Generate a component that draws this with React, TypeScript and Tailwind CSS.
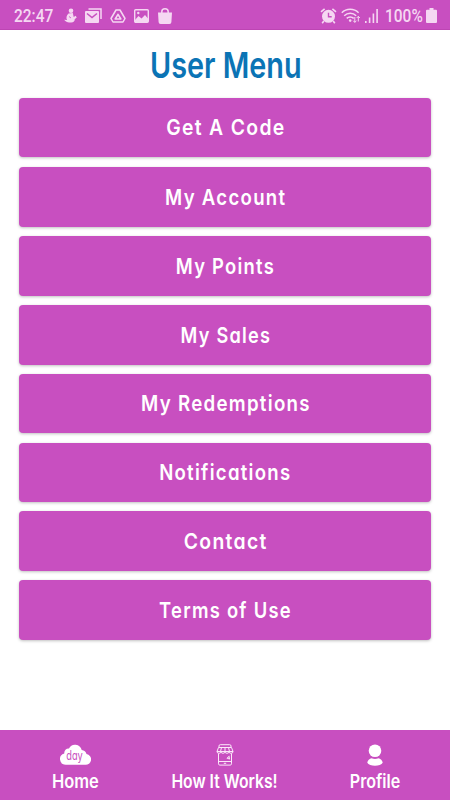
import React from 'react';

interface MenuItem {
    label: string;
    textClass: string;
}

const menuItems: MenuItem[] = [
    { label: 'Get A Code', textClass: 'scale-x-[0.88]' },
    { label: 'My Account', textClass: 'scale-x-[0.845]' },
    { label: 'My Points', textClass: 'scale-x-[0.835]' },
    { label: 'My Sales', textClass: 'scale-x-[0.825]' },
    { label: 'My Redemptions', textClass: 'scale-x-[0.85]' },
    { label: 'Notifications', textClass: 'scale-x-[0.845]' },
    { label: 'Contact', textClass: 'scale-x-[0.88]' },
    { label: 'Terms of Use', textClass: 'scale-x-[0.835]' },
];

function StatusBar() {
    return (
        <header className="flex h-[30px] shrink-0 items-center justify-between border-b border-[#bd45b3] bg-[#c84fc0] pl-[14px] pr-[13px] pt-[2px] font-[Roboto,sans-serif] text-[#f5d7f2]">
            <div className="flex items-center">
                <span className="w-[49.500px] origin-left scale-x-[0.86] whitespace-nowrap text-[18px] font-medium leading-none">22:47</span>
                {/* Figure */}
                <svg className="h-[15px] w-[13px]" viewBox="0 0 13 15" fill="currentColor">
                    <circle cx="7" cy="2.8" r="2.3" />
                    <path d="M4.500 5.500 8.800 5l.9 4 2-1.200 1 1.800-2 1.600c.3 1.800-1.200 3.300-3.500 3.300-3.200 0-5.800-.8-7.100-2.800l3 .2C1.800 10 2.500 7.500 4.500 5.500z" />
                    <path d="M5 8.500l2 1.500" stroke="#c84fc0" strokeWidth="0.800" />
                </svg>
                {/* Mail */}
                <svg className="ml-[8px] h-[15px] w-[17px]" viewBox="0 0 17 15" fill="none">
                    <path d="M3.500 1H16v10" stroke="currentColor" strokeWidth="1.500" />
                    <rect x="0" y="3" width="14" height="12" rx="1" fill="currentColor" />
                    <path d="M2 5.500l5 4 5-4" stroke="#c84fc0" strokeWidth="1.600" />
                </svg>
                {/* Drive triangle */}
                <svg className="ml-[8px] h-[14px] w-[16px]" viewBox="0 0 16 14" fill="none" stroke="currentColor" strokeLinejoin="round">
                    <path d="M6 1h4l5 8.500-2 3.500H3L1 9.500z" strokeWidth="1.500" />
                    <path d="M8 5.300 5.200 10h5.600z" strokeWidth="1.600" />
                </svg>
                {/* Picture */}
                <svg className="ml-[8px] h-[14px] w-[15px]" viewBox="0 0 15 14">
                    <rect x="0.700" y="0.700" width="13.600" height="12.600" rx="1" fill="none" stroke="currentColor" strokeWidth="1.400" />
                    <path d="M1 11l3.500-4 3 2.500L11 6l3 3.500V13H1z" fill="currentColor" />
                    <circle cx="4.300" cy="4" r="1.200" fill="currentColor" />
                </svg>
                {/* Shopping bag */}
                <svg className="ml-[9px] h-[16px] w-[14px]" viewBox="0 0 14 16">
                    <path d="M0 4.500h14l-.6 9.500a2 2 0 0 1-2 2H2.600a2 2 0 0 1-2-2z" fill="currentColor" />
                    <path d="M3.800 6V3.800a3.200 3 0 0 1 6.400 0V6" fill="none" stroke="currentColor" strokeWidth="1.500" />
                </svg>
            </div>
            <div className="flex items-center">
                {/* Alarm */}
                <svg className="h-[16px] w-[17px]" viewBox="0 0 17 16" fill="none" stroke="currentColor">
                    <path d="M1 3.800 4.600.8M16 3.800 12.400.8M3.800 13l-1.600 2.300M13.200 13l1.600 2.300" strokeWidth="1.600" />
                    <circle cx="8.500" cy="8.300" r="6.500" fill="currentColor" stroke="none" />
                    <path d="M8.500 4.800v4h3.200" stroke="#c84fc0" strokeWidth="1.400" />
                </svg>
                {/* Wifi */}
                <svg className="ml-[4px] h-[15px] w-[20px]" viewBox="0 0 20 15" fill="none" stroke="currentColor" strokeWidth="1.500">
                    <path d="M.8 4.800c4.700-4.700 12.100-4.700 16.800 0M3.200 7.700c3.400-3.300 8.700-3.300 12 0M5.700 10.400c2-2 5-2 7 0" />
                    <circle cx="9.200" cy="12.600" r="1.300" fill="currentColor" stroke="none" />
                    <path d="M13.800 9v5.300M12.200 12.700l1.600 1.700 1.600-1.700M17.300 13.500V8.400M15.700 10l1.600-1.700L18.900 10" strokeWidth="1" />
                </svg>
                {/* Signal */}
                <svg className="ml-[4px] h-[14px] w-[13px]" viewBox="0 0 13 14" fill="currentColor">
                    <path d="M0 12h1.600v2H0zM3.800 8.500h1.600V14H3.800zM7.600 4.500h1.600V14H7.600zM11.300 0h1.600v14h-1.600z" />
                </svg>
                <span className="ml-[7px] w-[41px] origin-left scale-x-[0.86] whitespace-nowrap text-[18px] font-medium leading-none">100%</span>
                {/* Battery */}
                <svg className="h-[15px] w-[11px]" viewBox="0 0 11 15" fill="currentColor">
                    <path d="M3.500 0h4v1.700H10a1 1 0 0 1 1 1V14a1 1 0 0 1-1 1H1a1 1 0 0 1-1-1V2.700a1 1 0 0 1 1-1h2.500z" />
                </svg>
            </div>
        </header>
    );
}

function CloudIcon() {
    return (
        <svg className="h-[22px] w-[32px]" viewBox="0 0 32 22">
            <path
                d="M6.800 20.800a5.800 5.800 0 0 1-1.500-11.400C5 6.500 7.200 4.300 10 4.500 11.300 1.800 13.700.4 16.700.8c3.200.4 5.300 2.600 6 5.200 2.500.2 4.300 1.700 4.800 4.100a5.400 5.400 0 0 1-1.600 10.700z"
                fill="white"
            />
            <text x="7.300" y="15.800" fontSize="12.500" textLength="16.500" lengthAdjust="spacingAndGlyphs" fill="#c84fc0" className="font-[Inter,sans-serif] font-normal [font-feature-settings:'cv11']">
                day
            </text>
        </svg>
    );
}

function StoreIcon() {
    return (
        <svg className="h-[22px] w-[18px]" viewBox="0 0 18 22" fill="none" stroke="#fbe8f9" strokeWidth="1">
            <path d="M3 3.500V2a1.300 1.300 0 0 1 1.300-1.300h9.400A1.300 1.300 0 0 1 15 2v1.500" />
            <path d="M2.500 3.500h13l1.500 4H1zM5.500 3.500l-1 4M9 3.500v4M12.500 3.500l1 4" />
            <path d="M1 7.500a2 1.800 0 0 0 4 0 2 1.800 0 0 0 4 0 2 1.800 0 0 0 4 0 2 1.800 0 0 0 4 0" />
            <path d="M2.500 9.500v10.300c0 .8.500 1.300 1.300 1.300h10.400c.8 0 1.300-.5 1.300-1.300V9.500M2.500 17.500h13M7.800 19.300h2.400" />
            <path d="M13.500 11.800l-2.500 2.500h3M13.200 12.500v3" />
        </svg>
    );
}

function ProfileIcon() {
    return (
        <svg className="h-[22px] w-[16px]" viewBox="0 0 16 22" fill="white">
            <circle cx="8" cy="6.700" r="6.300" />
            <path d="M.3 18.800c0-2.500 2.500-4.100 4.200-4.600 2.300 1 4.700 1 7 0 1.700.5 4.200 2.100 4.200 4.600-2 3.800-13.400 3.800-15.400 0z" />
        </svg>
    );
}

function BottomNav() {
    return (
        <nav className="grid h-[70px] shrink-0 grid-cols-3 bg-[#c84fc0] text-[18.500px] font-semibold text-white">
            <button className="flex flex-col items-center pt-[14px]">
                <CloudIcon />
                <span className="mt-[3px] scale-x-[0.89] whitespace-nowrap leading-[24px]">Home</span>
            </button>
            <button className="flex flex-col items-center pt-[14px]">
                <StoreIcon />
                <span className="mt-[3px] scale-x-[0.85] whitespace-nowrap leading-[24px]">How It Works!</span>
            </button>
            <button className="flex flex-col items-center pt-[14px]">
                <ProfileIcon />
                <span className="mt-[3px] scale-x-[0.87] whitespace-nowrap leading-[24px]">Profile</span>
            </button>
        </nav>
    );
}

function App() {
    return (
        <div className="flex h-[800px] w-[450px] flex-col overflow-hidden bg-white font-[Inter,sans-serif] [font-feature-settings:'cv11']">
            <StatusBar />
            <main className="flex flex-1 flex-col pl-[18.500px] pr-[19px] pt-[12px]">
                <h1 className="flex h-[46px] items-center justify-center pl-[2px] text-[36px] font-semibold leading-[46px] text-[#0b74b5]">
                    <span className="scale-x-[0.8] whitespace-nowrap">User Menu</span>
                </h1>
                <div className="mt-[9.500px] flex flex-col gap-[9.200px]">
                    {menuItems.map((item) => (
                        <button
                            key={item.label}
                            className="flex h-[59.600px] items-center justify-center rounded bg-[#c84fc0] pl-[2px] pt-[0.500px] text-[22px] font-semibold tracking-[1.500px] text-white shadow-[0_1px_3px_rgba(0,0,0,0.25)] first:mb-[1.200px]"
                        >
                            <span className={`whitespace-nowrap ${item.textClass}`}>{item.label}</span>
                        </button>
                    ))}
                </div>
            </main>
            <BottomNav />
        </div>
    );
}

export default App;
